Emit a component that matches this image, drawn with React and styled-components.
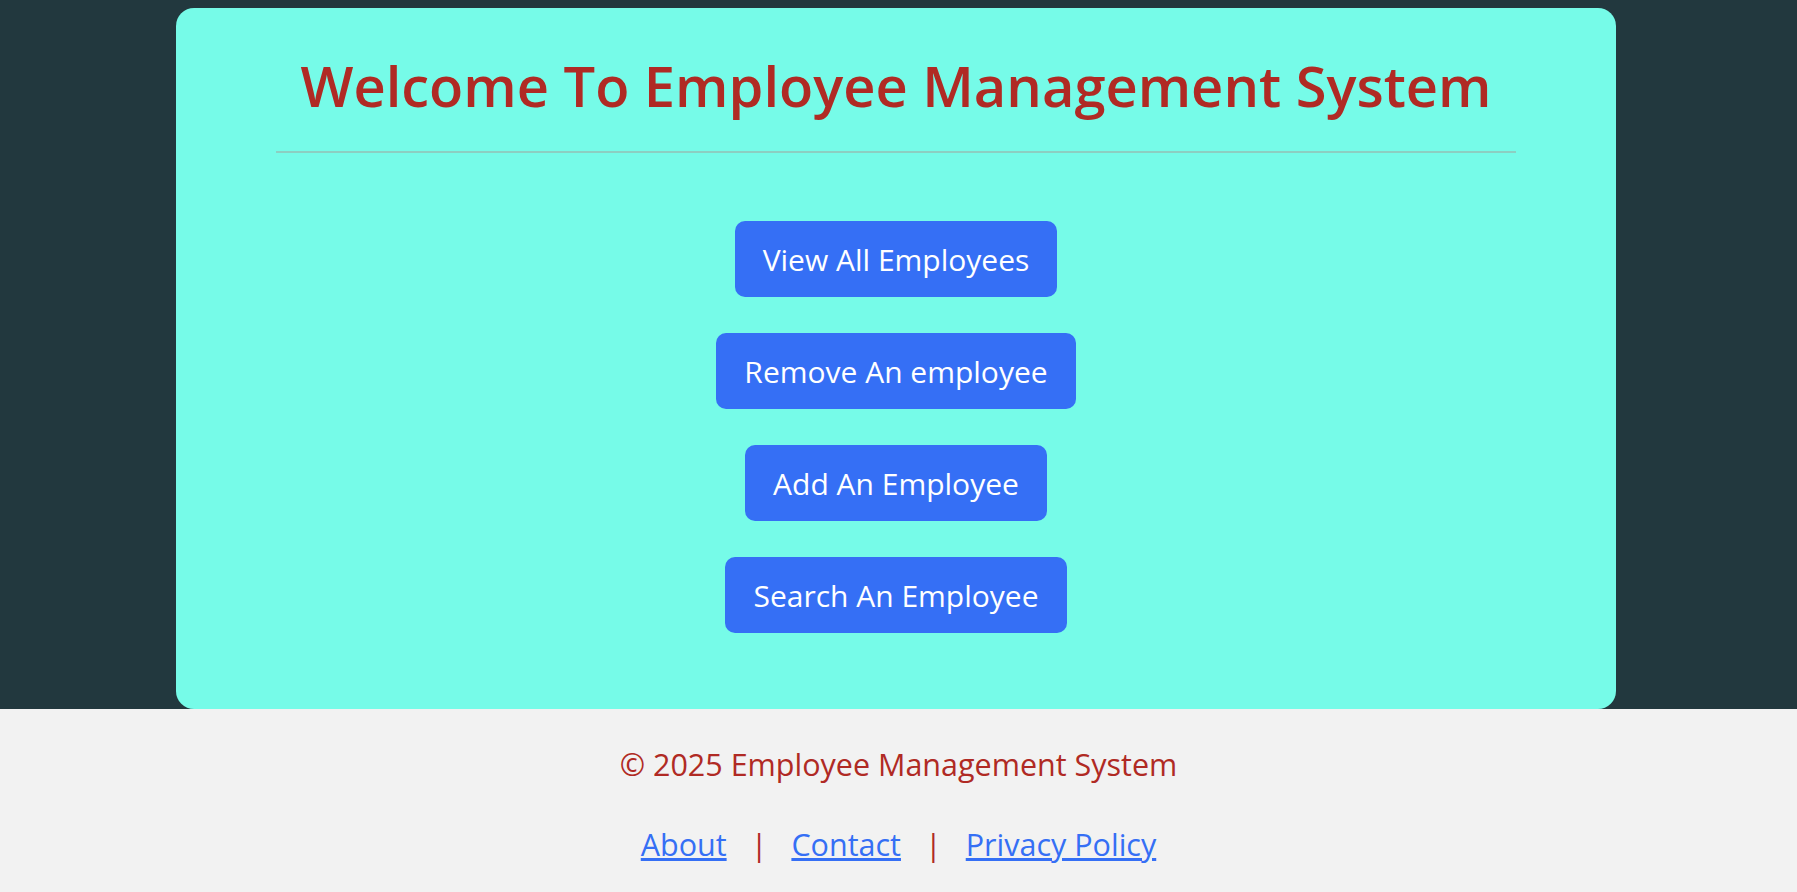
import React from 'react';
import styled, {createGlobalStyle} from 'styled-components';

const GlobalStyle = createGlobalStyle`
  html, body {
    margin: 0;
    padding: 0;
  }
  body {
    background-color: #22383e;
    font-family: "Open Sans", "Noto Sans", sans-serif;
  }
`;

const Page = styled.div`
  display: flex;
  flex-direction: column;
  min-height: 892px;
`;

const Main = styled.main`
  flex: 1;
  padding-top: 8px;
`;

const Card = styled.section`
  width: 1440px;
  margin-left: 176px;
  box-sizing: border-box;
  padding: 0 100px 76px;
  background-color: #76fbe8;
  border-radius: 18px;
`;

const Title = styled.h1`
  margin: 0;
  padding-top: 39px;
  font-size: 56px;
  line-height: 76px;
  font-weight: 600;
  color: #b02a24;
  text-align: center;
  white-space: nowrap;
`;

const Divider = styled.hr`
  margin: 28px 0 0;
  border: none;
  height: 2px;
  background-color: #8ccfc2;
`;

const ButtonStack = styled.div`
  display: flex;
  flex-direction: column;
  align-items: center;
  gap: 36px;
  margin-top: 68px;
`;

const ActionButton = styled.button`
  height: 76px;
  padding: 0 28px;
  border: none;
  border-radius: 10px;
  background-color: #356ff5;
  color: #ffffff;
  font-family: inherit;
  font-size: 30px;
  cursor: pointer;

  &:hover {
    background-color: #2a5cd6;
  }
`;

const Footer = styled.footer`
  background-color: #f2f2f2;
  text-align: center;
  padding: 35px 0 28px;
`;

const Copyright = styled.p`
  margin: 0;
  font-size: 30.5px;
  line-height: 40px;
  color: #b02a24;
`;

const LinkRow = styled.nav`
  margin-top: 40px;
  display: flex;
  justify-content: center;
  align-items: center;
  gap: 24px;
  font-size: 30.5px;
  line-height: 40px;
`;

const FooterLink = styled.a`
  color: #356ff5;
  text-decoration: underline;
`;

const Separator = styled.span`
  color: #b02a24;
`;

const actions = [
    'View All Employees',
    'Remove An employee',
    'Add An Employee',
    'Search An Employee',
];

const links = ['About', 'Contact', 'Privacy Policy'];

const App = () => {
    return (
        <Page>
            <GlobalStyle/>
            <Main>
                <Card>
                    <Title>Welcome To Employee Management System</Title>
                    <Divider/>
                    <ButtonStack>
                        {actions.map((label) => (
                            <ActionButton key={label}>{label}</ActionButton>
                        ))}
                    </ButtonStack>
                </Card>
            </Main>
            <Footer>
                <Copyright>© 2025 Employee Management System</Copyright>
                <LinkRow>
                    {links.map((link, i) => (
                        <React.Fragment key={link}>
                            {i > 0 && <Separator>|</Separator>}
                            <FooterLink href="#">{link}</FooterLink>
                        </React.Fragment>
                    ))}
                </LinkRow>
            </Footer>
        </Page>
    );
};

export default App;
